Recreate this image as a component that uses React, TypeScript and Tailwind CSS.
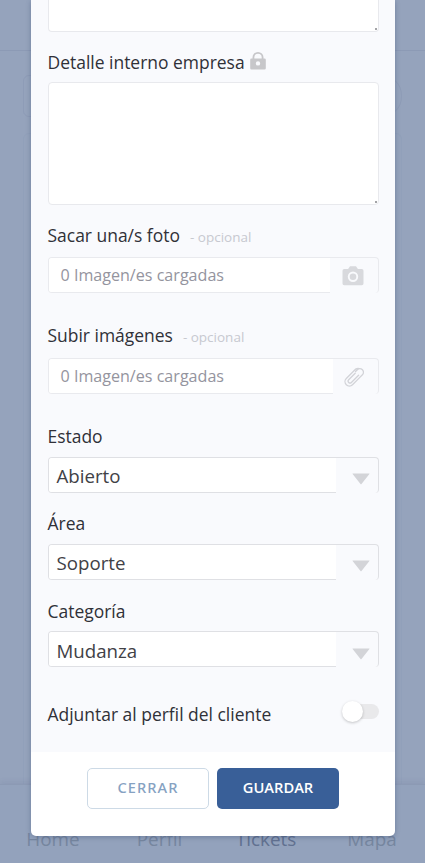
import type { ReactNode } from "react";

function Label({ children, optional }: { children: ReactNode; optional?: boolean }) {
  return (
    <div className="-ml-px flex h-[26px] items-center whitespace-nowrap pl-[0.500px] text-[17.470px] leading-[26px] text-[#303138]">
      {children}
      {optional && <span className="ml-[10px] pt-[3px] text-[13.500px] text-[#c7c9d0]">- opcional</span>}
    </div>
  );
}

function Camera() {
  return (
    <svg width="22" height="20" viewBox="0 0 22 20" className="mr-[14px] mt-px" fill="#d8d9dd">
      <path
        fillRule="evenodd"
        d="M8 .3h6l1.900 2.700H19.800A1.700 1.700 0 0 1 21.500 4.700v12.800a1.700 1.700 0 0 1-1.700 1.700h-17.600A1.700 1.700 0 0 1 .5 17.500V4.700a1.700 1.700 0 0 1 1.700-1.700h3.900zM11 5.500a5.200 5.200 0 1 0 0 10.400a5.200 5.200 0 0 0 0-10.400zm0 1.900a3.300 3.300 0 1 1 0 6.600a3.300 3.300 0 0 1 0-6.600z"
      />
    </svg>
  );
}

function Clip() {
  return (
    <svg width="20" height="20" viewBox="0 0 20 20" className="mr-[14px]" fill="none" stroke="#d2d3d8" strokeWidth="1.300" strokeLinecap="round">
      <g transform="rotate(45 10 10)">
        <path d="M14.400 6.500V2.500a3.600 3.600 0 0 0-7.200 0V5M14.400 6.500V16.500a4.400 4.400 0 0 1-8.800 0V3.500M7.200 5l0 0M5.600 3.500a4.400 4.400 0 0 1 2.200-3.200M8.200 6.500V15.700a1.900 1.900 0 0 0 3.800 0V5.500" />
      </g>
    </svg>
  );
}

function TextBox({ className }: { className: string }) {
  return (
    <div className={`flex items-end justify-end border border-[#e8e9ed] bg-white ${className}`}>
      <span className="mb-px mr-px h-[2px] w-[2px] rounded-full bg-[#85868a]" />
    </div>
  );
}

function FileField({ icon, fill }: { icon: ReactNode; fill: string }) {
  return (
    <div className="flex h-[36px] rounded-[4px] border border-b-0 border-[#e9eaee]">
      <div className={`flex items-center rounded-l-[3px] border-b border-[#e9eaee] bg-white pl-[11.500px] text-[16.100px] text-[#94949e] ${fill}`}>
        0 Imagen/es cargadas
      </div>
      <div className="flex flex-1 items-center justify-end">{icon}</div>
    </div>
  );
}

function SelectField({ label, value }: { label: string; value: string }) {
  return (
    <div className="h-[87.300px]">
      <Label>{label}</Label>
      <div className="mt-[7.500px] flex h-[36px] rounded-[4px] border border-b-0 border-[#dfe0e4]">
        <div className="flex w-[287px] items-center rounded-l-[3px] border-b border-[#dfe0e4] bg-white pl-[7.500px] pt-[3px] text-[18.700px] text-[#414146]">
          {value}
        </div>
        <div className="flex flex-1 items-center justify-end pr-2 pt-[8px]">
          <svg width="18" height="12" viewBox="0 0 18 12" fill="#d3d4d8">
            <path d="M.8.5h16.400q.6 0 .2.500L9.500 10.900q-.5.500-1 0L.6 1Q.2.500.8.500z" />
          </svg>
        </div>
      </div>
    </div>
  );
}

export default function App() {
  return (
    <div className="relative h-[863px] w-[425px] overflow-hidden bg-[#95a3bc] font-['Open_Sans',sans-serif]">
      <div className="flex h-full flex-col">
        <div className="h-[51px] border-b border-[#8c9ab5]" />
        <div className="mx-[23px] mt-6 h-[42px] rounded-[6px] rounded-r-[20px] border border-[#8e9cb7]" />
        <div className="mx-[23px] mt-4 flex-1 rounded-t-[6px] border border-b-0 border-[#91a0ba]" />
        <nav className="flex h-[79px] border-t border-[#8c9ab4] bg-[#93a2bc] pt-[41px] text-[18.900px] leading-[26px] text-[#76869f] shadow-[0_-2px_5px_rgba(70,90,130,0.12)]">
          <span className="w-[106px] text-center">Home</span>
          <span className="w-[107px] text-center">Perfil</span>
          <span className="w-[106px] text-center text-[#617190]">Tickets</span>
          <span className="w-[106px] text-center">Mapa</span>
        </nav>
      </div>

      <div className="absolute left-[31px] top-0 flex h-[836px] w-[364px] flex-col overflow-hidden rounded-b-[5px] bg-white shadow-[0_1px_5px_rgba(40,60,100,0.35)]">
        <div className="h-[752px] bg-[#f9fafd] pl-[17px] pr-4">
          <TextBox className="h-8 rounded-b-[4px] border-t-0" />
          <div className="mt-[17px] flex items-center">
            <Label>Detalle interno empresa</Label>
            <svg width="16" height="18" viewBox="0 0 16 18" className="mb-[3px] ml-[5px]" fill="#c7c7ca">
              <path
                fillRule="evenodd"
                d="M2.500 6.500V5.500a5.500 5.500 0 0 1 11 0v1H14.500A1.300 1.300 0 0 1 15.800 7.800v8.400a1.300 1.300 0 0 1-1.300 1.300h-13A1.300 1.300 0 0 1 .2 16.200V7.800A1.300 1.300 0 0 1 1.500 6.500zM4.300 6.500h7.400v-1a3.700 3.700 0 0 0-7.400 0zM8 9.200a2.200 2.200 0 1 0 0 4.400a2.200 2.200 0 0 0 0-4.400z"
              />
            </svg>
          </div>
          <TextBox className="mt-[7px] h-[123px] rounded-[4px]" />
          <div className="mt-[17px]">
            <Label optional>Sacar una/s foto</Label>
          </div>
          <div className="mt-[9px]">
            <FileField icon={<Camera />} fill="w-[281px]" />
          </div>
          <div className="mt-[29px]">
            <Label optional>Subir imágenes</Label>
          </div>
          <div className="mt-[10px]">
            <FileField icon={<Clip />} fill="w-[284px]" />
          </div>
          <div className="mt-[29px]">
            <SelectField label="Estado" value="Abierto" />
            <SelectField label="Área" value="Soporte" />
            <SelectField label="Categoría" value="Mudanza" />
          </div>
          <div className="mt-4 flex items-center justify-between">
            <Label>Adjuntar al perfil del cliente</Label>
            <div className="mb-[4px] flex h-[15px] w-[34px] items-center rounded-full bg-[#e9e9eb]">
              <span className="-ml-[3px] h-[21px] w-[21px] shrink-0 rounded-full bg-white shadow-[0_1px_3px_rgba(0,0,0,0.22)]" />
            </div>
          </div>
        </div>
        <div className="flex gap-2 pl-14 pt-4">
          <button className="h-[41px] w-[122px] rounded-[5px] border border-[#cddae6] pb-px font-['Noto_Sans',sans-serif] text-[14.600px] font-medium tracking-[1.100px] text-[#86a2c2]">
            CERRAR
          </button>
          <button className="h-[41px] w-[122px] rounded-[5px] bg-[#395f98] pb-[2px] text-[14.700px] font-semibold text-white">
            GUARDAR
          </button>
        </div>
      </div>
    </div>
  );
}
